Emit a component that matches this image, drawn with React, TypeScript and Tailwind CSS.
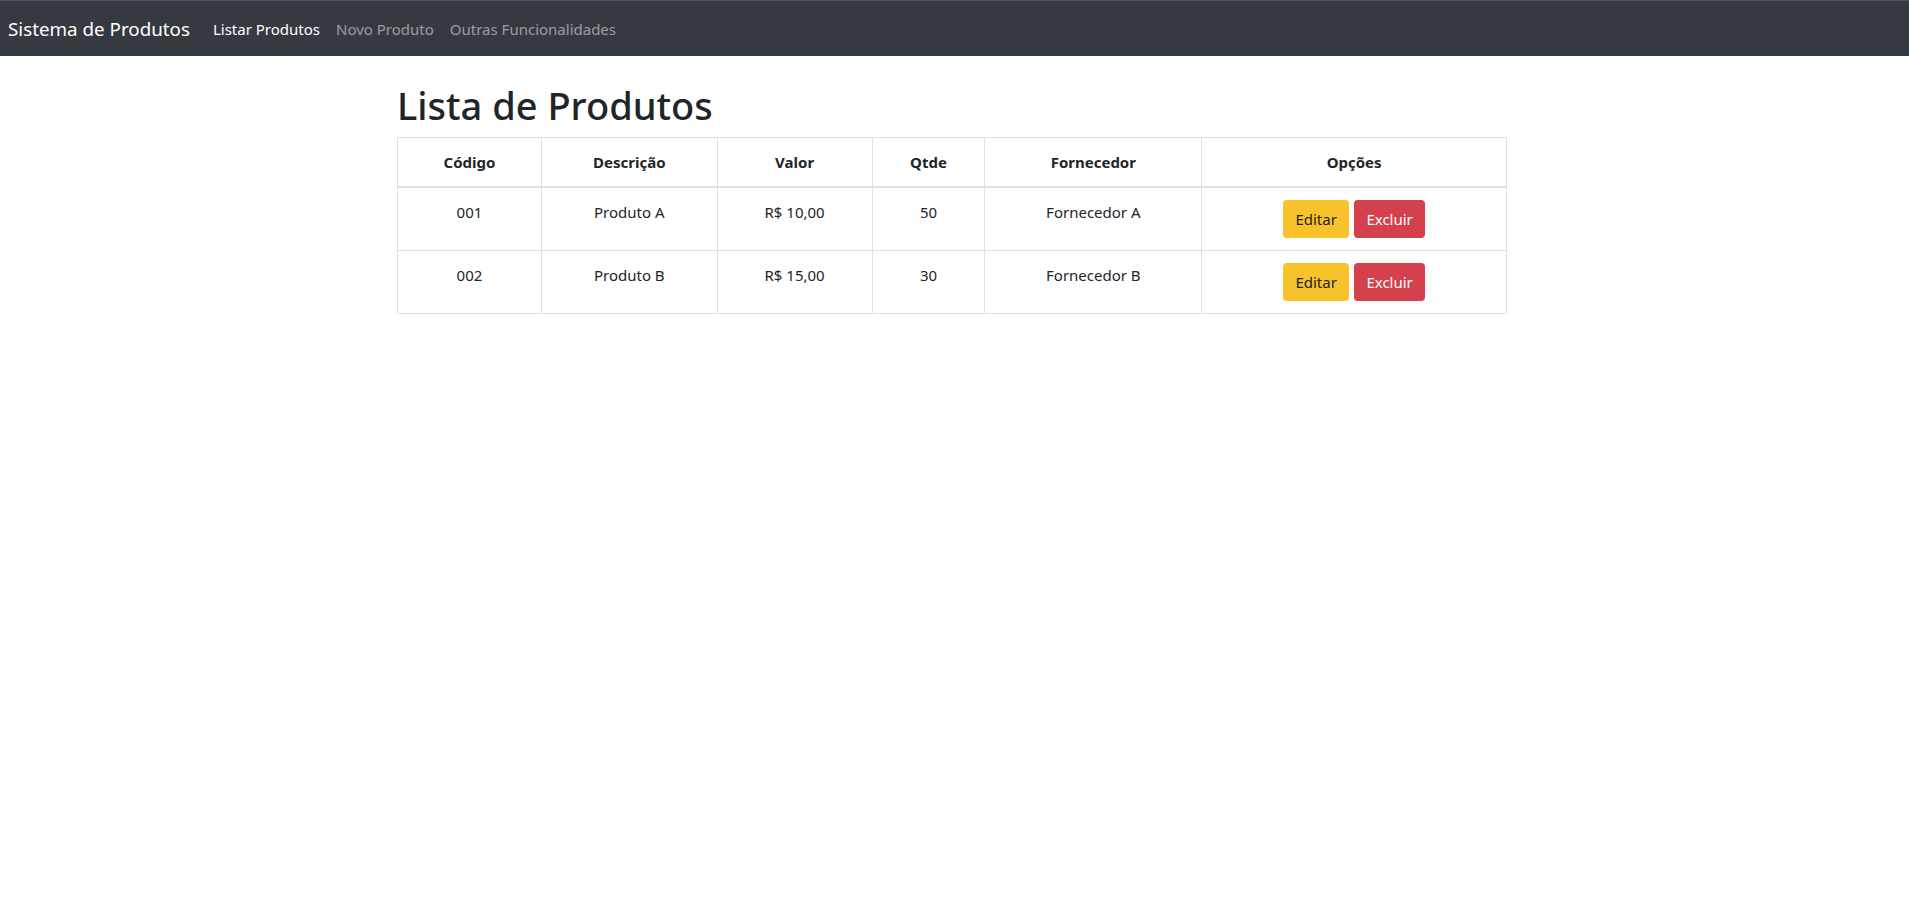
import React from "react";

const rows = [
  { c: "001", d: "Produto A", v: "R$ 10,00", q: "50", f: "Fornecedor A" },
  { c: "002", d: "Produto B", v: "R$ 15,00", q: "30", f: "Fornecedor B" },
];

export default function App() {
  const font = { fontFamily: '"Noto Sans", "Open Sans", Roboto, sans-serif' };
  return (
    <div className="min-h-screen bg-white text-[#212529]" style={font}>
      <nav className="flex h-[56px] items-center border-t border-[#50555b] bg-[#343a40] pl-[8px]">
        <span className="mr-[15px] text-[18.8px] leading-[30px] text-white">Sistema de Produtos</span>
        <a className="px-[8px] text-[15px] leading-[24px] text-white">Listar Produtos</a>
        <a className="px-[8px] text-[15px] leading-[24px] text-white/50">Novo Produto</a>
        <a className="px-[8px] text-[15px] leading-[24px] text-white/50">Outras Funcionalidades</a>
      </nav>
      <div className="pr-[5px]">
        <div className="mx-auto mt-[25px] w-[1140px] px-[15px]">
          <h1 className="mb-[8px] text-[38px] font-medium leading-[48px]">Lista de Produtos</h1>
          <table className="w-[1110px] border-collapse border border-[#dee2e6] text-center text-[15px] leading-[24px]">
            <thead>
              <tr>
                <th className="w-[144px] border border-b-2 border-[#dee2e6] p-[12px] font-bold">Código</th>
                <th className="w-[176px] border border-b-2 border-[#dee2e6] p-[12px] font-bold">Descrição</th>
                <th className="w-[155px] border border-b-2 border-[#dee2e6] p-[12px] font-bold">Valor</th>
                <th className="w-[113px] border border-b-2 border-[#dee2e6] p-[12px] font-bold">Qtde</th>
                <th className="w-[217px] border border-b-2 border-[#dee2e6] p-[12px] font-bold">Fornecedor</th>
                <th className="w-[305px] border border-b-2 border-[#dee2e6] p-[12px] font-bold">Opções</th>
              </tr>
            </thead>
            <tbody>
              {rows.map((r) => (
                <tr key={r.c}>
                  <td className="border border-[#dee2e6] p-[12px] align-top">{r.c}</td>
                  <td className="border border-[#dee2e6] p-[12px] align-top">{r.d}</td>
                  <td className="border border-[#dee2e6] p-[12px] align-top">{r.v}</td>
                  <td className="border border-[#dee2e6] p-[12px] align-top">{r.q}</td>
                  <td className="border border-[#dee2e6] p-[12px] align-top">{r.f}</td>
                  <td className="border border-[#dee2e6] p-[12px] align-top">
                    <div className="flex justify-center gap-[5px]">
                      <button className="h-[38px] w-[66px] rounded-[4px] bg-[#f8c22b] text-[15px] leading-[24px] text-[#212529]">
                        Editar
                      </button>
                      <button className="h-[38px] w-[71px] rounded-[4px] bg-[#d5404d] text-[15px] leading-[24px] text-white">
                        Excluir
                      </button>
                    </div>
                  </td>
                </tr>
              ))}
            </tbody>
          </table>
        </div>
      </div>
    </div>
  );
}
